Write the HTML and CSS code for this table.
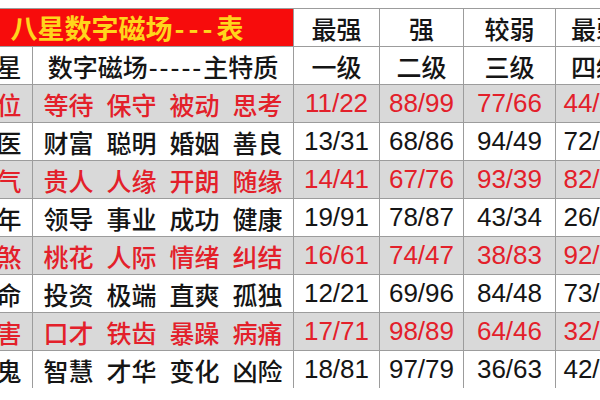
FILE: index.html
```html
<!DOCTYPE html>
<html lang="zh">
<head>
<meta charset="utf-8">
<title>八星数字磁场表</title>
<link rel="stylesheet" href="styles.css">
</head>
<body>
<div class="sheet">
  <div class="cell title">八星数字磁场<span class="dash-lg">---</span>表</div>
  <div class="cell head">最强</div>
  <div class="cell head">强</div>
  <div class="cell head">较弱</div>
  <div class="cell head">最弱</div>

  <div class="cell cjk">八星</div>
  <div class="cell cjk">数字磁场<span class="dash">-----</span>主特质</div>
  <div class="cell cjk">一级</div>
  <div class="cell cjk">二级</div>
  <div class="cell cjk">三级</div>
  <div class="cell cjk">四级</div>

  <div class="cell cjk hl">伏位</div>
  <div class="cell words hl"><span>等待</span><span>保守</span><span>被动</span><span>思考</span></div>
  <div class="cell num hl">11/22</div>
  <div class="cell num hl">88/99</div>
  <div class="cell num hl">77/66</div>
  <div class="cell num hl">44/33</div>

  <div class="cell cjk">天医</div>
  <div class="cell words"><span>财富</span><span>聪明</span><span>婚姻</span><span>善良</span></div>
  <div class="cell num">13/31</div>
  <div class="cell num">68/86</div>
  <div class="cell num">94/49</div>
  <div class="cell num">72/27</div>

  <div class="cell cjk hl">生气</div>
  <div class="cell words hl"><span>贵人</span><span>人缘</span><span>开朗</span><span>随缘</span></div>
  <div class="cell num hl">14/41</div>
  <div class="cell num hl">67/76</div>
  <div class="cell num hl">93/39</div>
  <div class="cell num hl">82/28</div>

  <div class="cell cjk">延年</div>
  <div class="cell words"><span>领导</span><span>事业</span><span>成功</span><span>健康</span></div>
  <div class="cell num">19/91</div>
  <div class="cell num">78/87</div>
  <div class="cell num">43/34</div>
  <div class="cell num">26/62</div>

  <div class="cell cjk hl">六煞</div>
  <div class="cell words hl"><span>桃花</span><span>人际</span><span>情绪</span><span>纠结</span></div>
  <div class="cell num hl">16/61</div>
  <div class="cell num hl">74/47</div>
  <div class="cell num hl">38/83</div>
  <div class="cell num hl">92/29</div>

  <div class="cell cjk">绝命</div>
  <div class="cell words"><span>投资</span><span>极端</span><span>直爽</span><span>孤独</span></div>
  <div class="cell num">12/21</div>
  <div class="cell num">69/96</div>
  <div class="cell num">84/48</div>
  <div class="cell num">73/37</div>

  <div class="cell cjk hl">祸害</div>
  <div class="cell words hl"><span>口才</span><span>铁齿</span><span>暴躁</span><span>病痛</span></div>
  <div class="cell num hl">17/71</div>
  <div class="cell num hl">98/89</div>
  <div class="cell num hl">64/46</div>
  <div class="cell num hl">32/23</div>

  <div class="cell cjk">五鬼</div>
  <div class="cell words"><span>智慧</span><span>才华</span><span>变化</span><span>凶险</span></div>
  <div class="cell num">18/81</div>
  <div class="cell num">97/79</div>
  <div class="cell num">36/63</div>
  <div class="cell num">42/24</div>
</div>
</body>
</html>
```

FILE: styles.css
```css
html, body {
  margin: 0;
  padding: 0;
  background: #ffffff;
  overflow: hidden;
}

body {
  width: 600px;
  height: 400px;
  padding-top: 8px;
  box-sizing: border-box;
}

.sheet {
  display: grid;
  grid-template-columns: 71px 260px 85px 83px 91px 80px;
  grid-auto-rows: 37px;
  gap: 1px;
  padding-top: 1px;
  margin-left: -39px;
  width: max-content;
  background: #9c9c9c;
  font-family: "Liberation Sans", "Noto Sans CJK SC", sans-serif;
  color: #151515;
}

.cell {
  background: #ffffff;
  display: flex;
  align-items: center;
  justify-content: center;
  white-space: nowrap;
  overflow: hidden;
}

.title {
  grid-column: span 2;
  background: #f70c0c;
  color: #ffd51c;
  font-family: "Noto Sans CJK SC", sans-serif;
  font-weight: 700;
  font-size: 27px;
}

.dash-lg {
  letter-spacing: 4px;
  padding-left: 2px;
}

.dash {
  letter-spacing: 2px;
  padding-left: 1px;
}

.head,
.cjk,
.words {
  font-family: "Noto Sans CJK SC", sans-serif;
  font-weight: 500;
  font-size: 25px;
}

.words {
  gap: 13px;
}

.num {
  font-size: 26px;
}

.hl {
  background: #d9d9d9;
  color: #e3202a;
}
```
